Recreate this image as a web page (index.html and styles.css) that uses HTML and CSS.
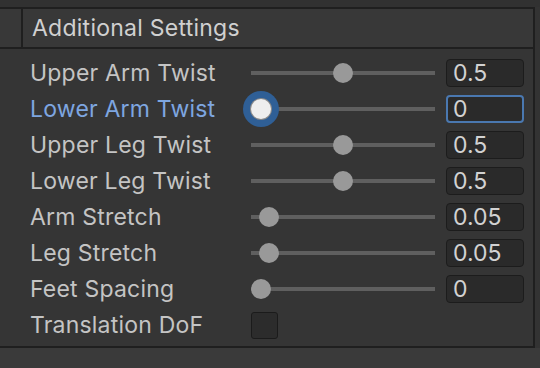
FILE: index.html
```html
<!DOCTYPE html>
<html>
<head>
<meta charset="utf-8">
<link rel="stylesheet" href="styles.css">
</head>
<body>
<div class="window">
  <div class="topstrip"></div>
  <div class="panel">
    <div class="header">
      <div class="gutter"></div>
      <div class="title">Additional Settings</div>
    </div>
    <div class="rows">
      <div class="row">
        <div class="label">Upper Arm Twist</div>
        <div class="slider"><div class="track"></div><div class="thumb" style="--v:0.5"></div></div>
        <div class="field">0.5</div>
      </div>
      <div class="row active">
        <div class="label">Lower Arm Twist</div>
        <div class="slider"><div class="track"></div><div class="thumb focus" style="--v:0"></div></div>
        <div class="field focus">0</div>
      </div>
      <div class="row">
        <div class="label">Upper Leg Twist</div>
        <div class="slider"><div class="track"></div><div class="thumb" style="--v:0.5"></div></div>
        <div class="field">0.5</div>
      </div>
      <div class="row">
        <div class="label">Lower Leg Twist</div>
        <div class="slider"><div class="track"></div><div class="thumb" style="--v:0.5"></div></div>
        <div class="field">0.5</div>
      </div>
      <div class="row">
        <div class="label">Arm Stretch</div>
        <div class="slider"><div class="track"></div><div class="thumb" style="--v:0.05"></div></div>
        <div class="field">0.05</div>
      </div>
      <div class="row">
        <div class="label">Leg Stretch</div>
        <div class="slider"><div class="track"></div><div class="thumb" style="--v:0.05"></div></div>
        <div class="field">0.05</div>
      </div>
      <div class="row">
        <div class="label">Feet Spacing</div>
        <div class="slider"><div class="track"></div><div class="thumb" style="--v:0"></div></div>
        <div class="field">0</div>
      </div>
      <div class="row">
        <div class="label">Translation DoF</div>
        <div class="checkbox"></div>
      </div>
    </div>
  </div>
  <div class="footer"></div>
</div>
</body>
</html>
```

FILE: styles.css
```css
html, body {
  margin: 0;
  padding: 0;
  background: #333333;
}
body {
  font-family: Inter, "Noto Sans", "Liberation Sans", sans-serif;
  color: #c6c6c6;
}
.window {
  width: 540px;
  height: 368px;
  display: flex;
  flex-direction: column;
  overflow: hidden;
}
.topstrip {
  height: 7px;
  background: #313131;
  flex: none;
}
.panel {
  flex: none;
  height: 341px;
  box-sizing: border-box;
  margin-right: 5px;
  border-top: 2px solid #1f1f1f;
  border-right: 2px solid #1f1f1f;
  border-bottom: 2px solid #1f1f1f;
  background: #353535;
  display: flex;
  flex-direction: column;
}
.header {
  height: 38px;
  flex: none;
  display: flex;
  align-items: stretch;
  border-bottom: 2px solid #1f1f1f;
  background: #383838;
}
.gutter {
  width: 21px;
  border-right: 2px solid #1f1f1f;
}
.title {
  padding-left: 9px;
  font-size: 23px;
  letter-spacing: 0.25px;
  line-height: 38px;
  color: #d0d0d0;
}
.rows {
  padding-top: 6px;
  display: flex;
  flex-direction: column;
}
.row {
  height: 36px;
  display: flex;
  align-items: center;
  padding-left: 30px;
}
.label {
  width: 221px;
  font-size: 23px;
  letter-spacing: 0.2px;
  color: #c4c4c4;
  white-space: nowrap;
}
.row.active .label {
  color: #7ea6e0;
}
.slider {
  position: relative;
  width: 184px;
  height: 20px;
}
.track {
  position: absolute;
  left: 0;
  right: 0;
  top: 8px;
  height: 4px;
  background: #5f5f5f;
}
.thumb {
  position: absolute;
  top: 0;
  left: calc((100% - 20px) * var(--v, 0));
  width: 20px;
  height: 20px;
  border-radius: 50%;
  background: #999999;
}
.thumb.focus {
  background: #eeeeee;
  box-shadow: 0 0 0 1px #8a8a8a, 0 0 0 8px #2f5f96;
}
.field {
  margin-left: 11px;
  width: 78px;
  height: 28px;
  box-sizing: border-box;
  border: 1px solid #1c1c1c;
  border-radius: 4px;
  background: #2a2a2a;
  font-size: 23px;
  line-height: 26px;
  padding-left: 6px;
  color: #d2d2d2;
}
.field.focus {
  border: 2px solid #4a78b0;
  line-height: 24px;
  padding-left: 5px;
}
.checkbox {
  width: 27px;
  height: 27px;
  box-sizing: border-box;
  border: 1px solid #1b1b1b;
  border-radius: 3px;
  background: #2c2c2c;
}
.footer {
  flex: 1;
  background: #3a3a3a;
}
```
